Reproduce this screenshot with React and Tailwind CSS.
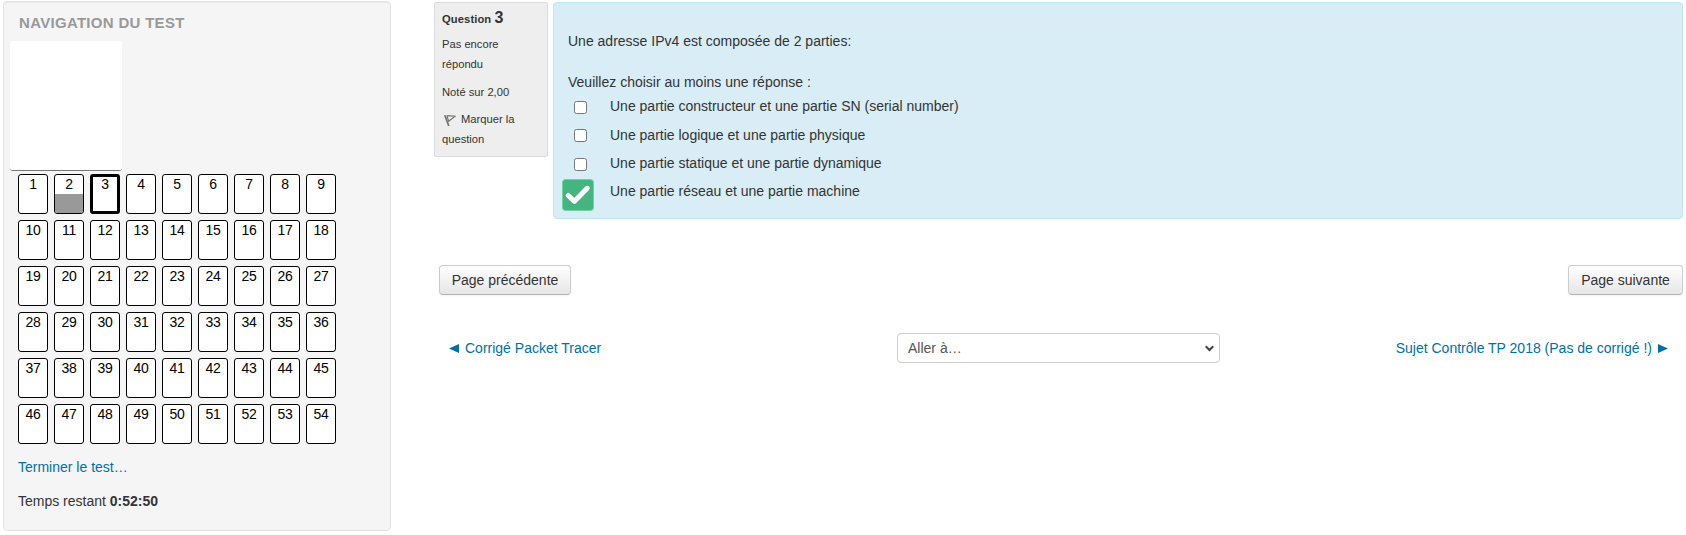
const questions = Array.from({ length: 54 }, (_, i) => i + 1);

const answers = [
  { text: "Une partie constructeur et une partie SN (serial number)", row: "h-[29px]", box: "mt-[9px]" },
  { text: "Une partie logique et une partie physique", row: "h-[28px]", box: "mt-2" },
  { text: "Une partie statique et une partie dynamique", row: "h-[28px]", box: "mt-[9px]" },
  { text: "Une partie réseau et une partie machine", row: "h-[28px]", checked: true },
];

function NavButton({ n }) {
  if (n === 3) {
    return (
      <a className="h-10 w-[30px] rounded-[3px] border-[3px] border-black bg-white text-center text-[14px] leading-[15px] tracking-[-0.2px] text-black">
        {n}
      </a>
    );
  }
  return (
    <a className="flex h-10 w-[30px] flex-col overflow-hidden rounded-[3px] border border-black bg-white text-center text-[14px] tracking-[-0.2px] text-black">
      <span className="h-[19px] leading-[19px]">{n}</span>
      {n === 2 && <span className="flex-1 bg-[#999999]" />}
    </a>
  );
}

function Sidebar() {
  return (
    <aside className="h-[530px] w-[388px] shrink-0 rounded border border-[#e3e3e3] bg-[#f5f5f5] shadow-[inset_0_1px_1px_rgba(0,0,0,0.05)]">
      <h2 className="mt-[10px] ml-[15px] h-[29px] text-[15px] leading-[21px] font-bold tracking-[0.3px] text-[#999999]">
        NAVIGATION DU TEST
      </h2>
      <div className="ml-[6px] h-[130px] w-28 rounded-[3px] border-b border-[#777777] bg-white" />
      <nav className="mt-[3px] ml-[14px] grid w-[318px] grid-cols-9 gap-[6px]">
        {questions.map((n) => (
          <NavButton key={n} n={n} />
        ))}
      </nav>
      <a className="mt-[13px] ml-[14px] block w-fit leading-5 text-[#0070a8]">Terminer le test…</a>
      <p className="mt-[14px] ml-[14px] leading-5">
        Temps restant <b>0:52:50</b>
      </p>
    </aside>
  );
}

function FlagIcon() {
  return (
    <svg className="mr-[5px] ml-[2px] inline-block align-[-4px]" width="12" height="13" viewBox="0 0 12 13" fill="none" stroke="#777777">
      <path d="M0.8 1.2 4.8 12" strokeWidth="1.8" />
      <path d="M2.8 1.6 4.7 7.2 11 2.2 3 1.6" strokeWidth="1.2" />
    </svg>
  );
}

function QuestionInfo() {
  return (
    <div className="mt-[1px] h-[155px] w-[114px] shrink-0 rounded-[2px] border border-[#dcdcdc] bg-[#eeeeee] pt-[5px] pl-[7px] text-[11.2px] leading-5">
      <h3 className="h-5 font-bold">
        <span className="tracking-[0.1px]">Question </span><span className="text-[16px]">3</span>
      </h3>
      <p className="mt-[6px]">Pas encore<br />répondu</p>
      <p className="mt-2">Noté sur 2,00</p>
      <p className="mt-[7px]"><FlagIcon />Marquer la<br />question</p>
    </div>
  );
}

function Answer({ item }) {
  return (
    <div className={`flex ${item.row}`}>
      <div className="w-[42px] shrink-0">
        {item.checked ? (
          <svg className="-ml-[6px] mt-[2px]" width="32" height="32" viewBox="0 0 32 32">
            <rect x="0.5" y="0.5" width="31" height="31" rx="3" fill="#44b581" stroke="#74d1a4" />
            <path d="M6.2 16.5 12.5 22.3 25.2 9.3" fill="none" stroke="#fff" strokeWidth="5" strokeLinecap="round" strokeLinejoin="round" />
          </svg>
        ) : (
          <input
            type="checkbox"
            className={`ml-[6px] block h-[13px] w-[13px] appearance-none rounded-[2.5px] border border-[#767676] bg-white ${item.box}`}
          />
        )}
      </div>
      <span className="mt-1 leading-5">{item.text}</span>
    </div>
  );
}

function Question() {
  return (
    <section className="flex">
      <QuestionInfo />
      <div className="mt-[1px] ml-[5px] h-[217px] w-[1130px] rounded border border-[#bce8f1] bg-[#d9edf7] pt-[28px] pl-[14px]">
        <p className="leading-5">Une adresse IPv4 est composée de 2 parties:</p>
        <p className="mt-[21px] leading-5">Veuillez choisir au moins une réponse :</p>
        <div>
          {answers.map((a) => (
            <Answer key={a.text} item={a} />
          ))}
        </div>
      </div>
    </section>
  );
}

function PageButton({ children, className }) {
  return (
    <button
      className={`h-[30px] rounded border border-[#cccccc] border-b-[#b3b3b3] bg-linear-to-b from-white to-[#e6e6e6] text-center leading-5 shadow-[inset_0_1px_0_rgba(255,255,255,0.2),0_1px_2px_rgba(0,0,0,0.05)] ${className}`}
    >
      {children}
    </button>
  );
}

export default function App() {
  return (
    <div className="flex h-[535px] w-[1686px] overflow-hidden bg-white pt-[1px] pl-[3px] font-['Liberation_Sans',Arial,sans-serif] text-[14px] text-[#333333]">
      <Sidebar />
      <main className="ml-[43px] w-[1249px] shrink-0">
        <Question />
        <div className="mt-[46px] flex justify-between pl-[5px]">
          <PageButton className="w-[132px]">Page précédente</PageButton>
          <PageButton className="w-[115px]">Page suivante</PageButton>
        </div>
        <div className="mt-[38px] flex h-[30px] items-center justify-between pr-[15px] pl-[15px] text-[#0070a8]">
          <a className="flex w-[448px] items-center">
            <svg className="mr-[6px]" width="10" height="9" viewBox="0 0 10 9"><path d="M10 0v9L0 4.5z" fill="currentColor" /></svg>
            Corrigé Packet Tracer
          </a>
          <div className="flex h-[30px] w-[323px] items-center justify-between rounded border border-[#cccccc] bg-white pr-[5px] pl-[10px] text-[#555555]">
            <span>Aller à…</span>
            <svg width="9" height="7" viewBox="0 0 9 7" fill="none" stroke="#444444" strokeWidth="2"><path d="M0.7 1.2 4.5 5 8.3 1.2" /></svg>
          </div>
          <a className="flex w-[448px] items-center justify-end">
            Sujet Contrôle TP 2018 (Pas de corrigé !)
            <svg className="ml-[6px]" width="10" height="9" viewBox="0 0 10 9"><path d="M0 0v9l10-4.5z" fill="currentColor" /></svg>
          </a>
        </div>
      </main>
    </div>
  );
}
